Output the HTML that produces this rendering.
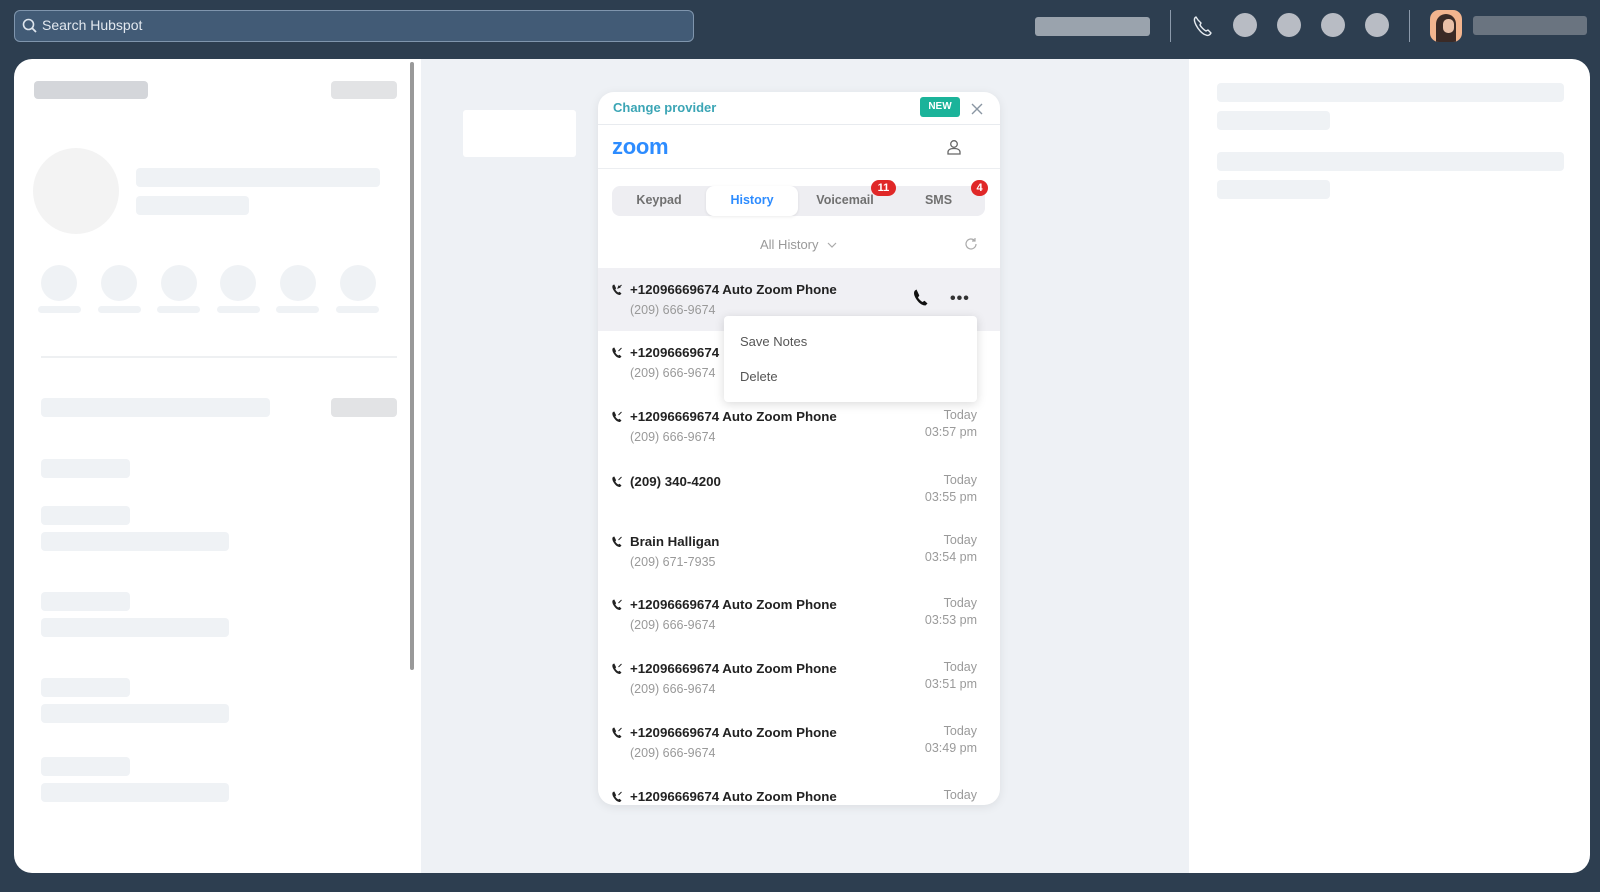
<!DOCTYPE html>
<html><head><meta charset="utf-8"><style>
*{box-sizing:border-box;margin:0;padding:0}
body{width:1600px;height:892px;background:#2d3e50;position:relative;overflow:hidden;font-family:"Liberation Sans",sans-serif}
.a{position:absolute}
.sk{position:absolute;background:#eff2f5;border-radius:4px}
.row{position:absolute;left:598px;width:402px;height:63px}
.nm{position:absolute;left:32px;top:14px;font-size:13.3px;font-weight:bold;color:#222}
.nb{position:absolute;left:32px;top:35px;font-size:12.5px;color:#999}
.ic{position:absolute;left:13px;top:16px}
.tm{position:absolute;right:23px;top:12px;font-size:12.5px;color:#9a9a9a;text-align:right;line-height:17px}
</style></head><body>
<div class="a" style="left:14px;top:10px;width:680px;height:32px;background:#425b76;border:1px solid #7f95ad;border-radius:6px"></div>
<svg class="a" style="left:22px;top:18px" width="16" height="16" viewBox="0 0 16 16"><circle cx="6.5" cy="6.5" r="5" fill="none" stroke="#dfe6ee" stroke-width="1.6"/><path d="M10 10l4 4" stroke="#dfe6ee" stroke-width="1.8"/></svg>
<div class="a" style="left:42px;top:17px;font-size:14px;color:#e2e8ef">Search Hubspot</div>
<div class="a" style="left:1035px;top:17px;width:115px;height:19px;background:#9aa3ad;border-radius:3px"></div>
<div class="a" style="left:1170px;top:10px;width:1px;height:32px;background:#8c9aab"></div>
<svg class="a" style="left:1191px;top:14px" width="24" height="24" viewBox="0 0 24 24"><path d="M5 3c-2 1-2 4 0 8s6 9 10 10c2 1 4 0 5-2l-3-3-2 1c-2-1-5-4-6-6l1-2-3-3z" fill="none" stroke="#e6ebf0" stroke-width="1.4" stroke-linejoin="round"/></svg>
<div class="a" style="left:1233px;top:13px;width:24px;height:24px;border-radius:50%;background:#b8bcc4"></div>
<div class="a" style="left:1277px;top:13px;width:24px;height:24px;border-radius:50%;background:#b8bcc4"></div>
<div class="a" style="left:1321px;top:13px;width:24px;height:24px;border-radius:50%;background:#b8bcc4"></div>
<div class="a" style="left:1365px;top:13px;width:24px;height:24px;border-radius:50%;background:#b8bcc4"></div>
<div class="a" style="left:1409px;top:10px;width:1px;height:32px;background:#8c9aab"></div>
<div class="a" style="left:1430px;top:10px;width:32px;height:32px;border-radius:9px;background:#f2b48e;overflow:hidden"><div class="a" style="left:6px;top:4px;width:20px;height:30px;border-radius:10px 10px 2px 2px;background:#3a2a26"></div><div class="a" style="left:13px;top:9px;width:11px;height:14px;border-radius:5px;background:#e9c0a8"></div></div>
<div class="a" style="left:1473px;top:16px;width:114px;height:19px;background:#6a7480;border-radius:3px"></div>

<div class="a" style="left:14px;top:59px;width:1576px;height:814px;background:#fff;border-radius:18px;overflow:hidden">
 <div class="a" style="left:407px;top:0;width:768px;height:814px;background:#eef1f5"></div>
 <div class="a" style="left:396px;top:3px;width:4px;height:608px;background:#999;border-radius:2px"></div>
</div>
<div class="sk" style="left:34px;top:81px;width:114px;height:18px;background:#d4d6da"></div>
<div class="sk" style="left:331px;top:81px;width:66px;height:18px;background:#e2e3e5"></div>
<div class="a" style="left:33px;top:148px;width:86px;height:86px;border-radius:50%;background:#f3f3f3"></div>
<div class="sk" style="left:136px;top:168px;width:244px;height:19px"></div>
<div class="sk" style="left:136px;top:196px;width:113px;height:19px"></div>
<div class="a" style="left:41px;top:265px;width:36px;height:36px;border-radius:50%;background:#eff2f5"></div>
<div class="a" style="left:101px;top:265px;width:36px;height:36px;border-radius:50%;background:#eff2f5"></div>
<div class="a" style="left:161px;top:265px;width:36px;height:36px;border-radius:50%;background:#eff2f5"></div>
<div class="a" style="left:220px;top:265px;width:36px;height:36px;border-radius:50%;background:#eff2f5"></div>
<div class="a" style="left:280px;top:265px;width:36px;height:36px;border-radius:50%;background:#eff2f5"></div>
<div class="a" style="left:340px;top:265px;width:36px;height:36px;border-radius:50%;background:#eff2f5"></div>
<div class="sk" style="left:38px;top:306px;width:43px;height:7px"></div>
<div class="sk" style="left:98px;top:306px;width:43px;height:7px"></div>
<div class="sk" style="left:157px;top:306px;width:43px;height:7px"></div>
<div class="sk" style="left:217px;top:306px;width:43px;height:7px"></div>
<div class="sk" style="left:276px;top:306px;width:43px;height:7px"></div>
<div class="sk" style="left:336px;top:306px;width:43px;height:7px"></div>
<div class="a" style="left:41px;top:356px;width:356px;height:2px;background:#eef0f2"></div>
<div class="sk" style="left:41px;top:398px;width:229px;height:19px"></div>
<div class="sk" style="left:331px;top:398px;width:66px;height:19px;background:#e2e3e5"></div>
<div class="sk" style="left:41px;top:459px;width:89px;height:19px"></div>
<div class="sk" style="left:41px;top:506px;width:89px;height:19px"></div>
<div class="sk" style="left:41px;top:532px;width:188px;height:19px"></div>
<div class="sk" style="left:41px;top:592px;width:89px;height:19px"></div>
<div class="sk" style="left:41px;top:618px;width:188px;height:19px"></div>
<div class="sk" style="left:41px;top:678px;width:89px;height:19px"></div>
<div class="sk" style="left:41px;top:704px;width:188px;height:19px"></div>
<div class="sk" style="left:41px;top:757px;width:89px;height:19px"></div>
<div class="sk" style="left:41px;top:783px;width:188px;height:19px"></div>
<div class="a" style="left:463px;top:110px;width:113px;height:47px;background:#fff;border-radius:3px"></div>
<div class="sk" style="left:1217px;top:83px;width:347px;height:19px"></div>
<div class="sk" style="left:1217px;top:111px;width:113px;height:19px"></div>
<div class="sk" style="left:1217px;top:152px;width:347px;height:19px"></div>
<div class="sk" style="left:1217px;top:180px;width:113px;height:19px"></div>

<div class="a" style="left:598px;top:92px;width:402px;height:713px;background:#fff;border-radius:16px;overflow:hidden;box-shadow:0 2px 10px rgba(0,0,0,.08)">
 <div class="a" style="left:15px;top:8px;font-size:13px;font-weight:bold;color:#3ba5b5">Change provider</div>
 <div class="a" style="left:322px;top:5px;width:40px;height:20px;background:#1bb39a;border-radius:3px;color:#fff;font-size:10px;font-weight:bold;text-align:center;line-height:20px">NEW</div>
 <svg class="a" style="left:373px;top:11px" width="12" height="12" viewBox="0 0 12 12"><path d="M1 1l10 10M11 1L1 11" stroke="#8a96a3" stroke-width="1.4"/></svg>
 <div class="a" style="left:0;top:32px;width:402px;height:1px;background:#e8ebef"></div>
 <div class="a" style="left:14px;top:44px;font-size:22px;line-height:22px;font-weight:bold;color:#2d8cff;letter-spacing:-0.3px">zoom</div>
 <svg class="a" style="left:348px;top:47px" width="16" height="16" viewBox="0 0 16 16"><circle cx="8" cy="5" r="3.3" fill="none" stroke="#666" stroke-width="1.3"/><path d="M2 15v-2c0-2 2-3.5 6-3.5s6 1.5 6 3.5v2z" fill="none" stroke="#666" stroke-width="1.3"/></svg>
 <div class="a" style="left:0;top:76px;width:402px;height:1px;background:#eceef1"></div>
 <div class="a" style="left:14px;top:94px;width:373px;height:30px;background:#eeeef2;border-radius:8px"></div>
 <div class="a" style="left:108px;top:94px;width:92px;height:30px;background:#fff;border-radius:8px;box-shadow:0 1px 3px rgba(0,0,0,.08)"></div>
 <div class="a" style="left:14px;top:101px;width:94px;text-align:center;font-size:12.5px;font-weight:bold;color:#707070">Keypad</div>
 <div class="a" style="left:108px;top:101px;width:92px;text-align:center;font-size:12.5px;font-weight:bold;color:#2d8cff">History</div>
 <div class="a" style="left:200px;top:101px;width:94px;text-align:center;font-size:12.5px;font-weight:bold;color:#707070">Voicemail</div>
 <div class="a" style="left:294px;top:101px;width:93px;text-align:center;font-size:12.5px;font-weight:bold;color:#707070">SMS</div>
 <div class="a" style="left:273px;top:88px;width:25px;height:16px;background:#e02828;border-radius:8px;color:#fff;font-size:11px;font-weight:bold;text-align:center;line-height:16px">11</div>
 <div class="a" style="left:373px;top:88px;width:17px;height:16px;background:#e02828;border-radius:8px;color:#fff;font-size:11px;font-weight:bold;text-align:center;line-height:16px">4</div>
 <div class="a" style="left:162px;top:145px;font-size:13px;color:#999">All History</div>
 <svg class="a" style="left:229px;top:149px" width="10" height="8" viewBox="0 0 10 8"><path d="M1 2l4 4 4-4" fill="none" stroke="#aaa" stroke-width="1.2"/></svg>
 <svg class="a" style="left:366px;top:145px" width="14" height="14" viewBox="0 0 14 14"><path d="M12 7a5 5 0 1 1-1.5-3.6M11 1v3h-3" fill="none" stroke="#aaa" stroke-width="1.2"/></svg>
</div>

<div class="row" style="top:268px;height:63px;background:#f0f0f4">
 <svg class="ic" width="12" height="12" viewBox="0 0 12 12"><path d="M2 1c-1 1-1 3 1 6s4 4 6 4l1.5-1.5-2-1.8-1.2.8c-1-.5-2.5-2-3-3l.8-1.2L3.3.5z" fill="#222"/><path d="M8 1.5l-1 2.5 2.5-1M7.5 4l3-3" stroke="#222" stroke-width="1"/></svg>
 <div class="nm">+12096669674 Auto Zoom Phone</div><div class="nb">(209) 666-9674</div>
 <svg class="a" style="left:314px;top:21px" width="18" height="18" viewBox="0 0 18 18"><path d="M3 1.5C1.5 3 1.5 6 4.5 10.5S11 16.5 13.5 16.5l2-2-3-2.8-2 1.3c-1.5-.8-3.7-3-4.5-4.5l1.3-2L4.5.5z" fill="#111"/></svg>
 <div class="a" style="left:352px;top:22px;font-size:16px;font-weight:bold;color:#333;letter-spacing:1px">•••</div>
</div>

<div class="row" style="top:331px"><svg class="ic" width="12" height="12" viewBox="0 0 12 12"><path d="M2 1c-1 1-1 3 1 6s4 4 6 4l1.5-1.5-2-1.8-1.2.8c-1-.5-2.5-2-3-3l.8-1.2L3.3.5z" fill="#222"/><path d="M7.5 4l3-3" stroke="#222"/></svg><div class="nm">+12096669674</div><div class="nb">(209) 666-9674</div></div>
<div class="row" style="top:395px"><svg class="ic" width="12" height="12" viewBox="0 0 12 12"><path d="M2 1c-1 1-1 3 1 6s4 4 6 4l1.5-1.5-2-1.8-1.2.8c-1-.5-2.5-2-3-3l.8-1.2L3.3.5z" fill="#222"/><path d="M7.5 4l3-3" stroke="#222"/></svg><div class="nm">+12096669674 Auto Zoom Phone</div><div class="nb">(209) 666-9674</div><div class="tm">Today<br>03:57 pm</div></div>
<div class="row" style="top:460px"><svg class="ic" width="12" height="12" viewBox="0 0 12 12"><path d="M2 1c-1 1-1 3 1 6s4 4 6 4l1.5-1.5-2-1.8-1.2.8c-1-.5-2.5-2-3-3l.8-1.2L3.3.5z" fill="#222"/><path d="M7.5 4l3-3" stroke="#222"/></svg><div class="nm">(209) 340-4200</div><div class="tm">Today<br>03:55 pm</div></div>
<div class="row" style="top:520px"><svg class="ic" width="12" height="12" viewBox="0 0 12 12"><path d="M2 1c-1 1-1 3 1 6s4 4 6 4l1.5-1.5-2-1.8-1.2.8c-1-.5-2.5-2-3-3l.8-1.2L3.3.5z" fill="#222"/><path d="M7.5 4l3-3" stroke="#222"/></svg><div class="nm">Brain Halligan</div><div class="nb">(209) 671-7935</div><div class="tm">Today<br>03:54 pm</div></div>
<div class="row" style="top:583px"><svg class="ic" width="12" height="12" viewBox="0 0 12 12"><path d="M2 1c-1 1-1 3 1 6s4 4 6 4l1.5-1.5-2-1.8-1.2.8c-1-.5-2.5-2-3-3l.8-1.2L3.3.5z" fill="#222"/><path d="M7.5 4l3-3" stroke="#222"/></svg><div class="nm">+12096669674 Auto Zoom Phone</div><div class="nb">(209) 666-9674</div><div class="tm">Today<br>03:53 pm</div></div>
<div class="row" style="top:647px"><svg class="ic" width="12" height="12" viewBox="0 0 12 12"><path d="M2 1c-1 1-1 3 1 6s4 4 6 4l1.5-1.5-2-1.8-1.2.8c-1-.5-2.5-2-3-3l.8-1.2L3.3.5z" fill="#222"/><path d="M7.5 4l3-3" stroke="#222"/></svg><div class="nm">+12096669674 Auto Zoom Phone</div><div class="nb">(209) 666-9674</div><div class="tm">Today<br>03:51 pm</div></div>
<div class="row" style="top:711px"><svg class="ic" width="12" height="12" viewBox="0 0 12 12"><path d="M2 1c-1 1-1 3 1 6s4 4 6 4l1.5-1.5-2-1.8-1.2.8c-1-.5-2.5-2-3-3l.8-1.2L3.3.5z" fill="#222"/><path d="M7.5 4l3-3" stroke="#222"/></svg><div class="nm">+12096669674 Auto Zoom Phone</div><div class="nb">(209) 666-9674</div><div class="tm">Today<br>03:49 pm</div></div>
<div class="row" style="top:775px;height:30px;overflow:hidden;border-radius:0 0 16px 16px"><svg class="ic" width="12" height="12" viewBox="0 0 12 12"><path d="M2 1c-1 1-1 3 1 6s4 4 6 4l1.5-1.5-2-1.8-1.2.8c-1-.5-2.5-2-3-3l.8-1.2L3.3.5z" fill="#222"/><path d="M7.5 4l3-3" stroke="#222"/></svg><div class="nm">+12096669674 Auto Zoom Phone</div><div class="tm">Today</div></div>

<div class="a" style="left:724px;top:316px;width:253px;height:86px;background:#fff;border-radius:4px;box-shadow:0 2px 10px rgba(0,0,0,.15)">
 <div class="a" style="left:16px;top:18px;font-size:13px;color:#555">Save Notes</div>
 <div class="a" style="left:16px;top:53px;font-size:13px;color:#555">Delete</div>
</div>
</body></html>
